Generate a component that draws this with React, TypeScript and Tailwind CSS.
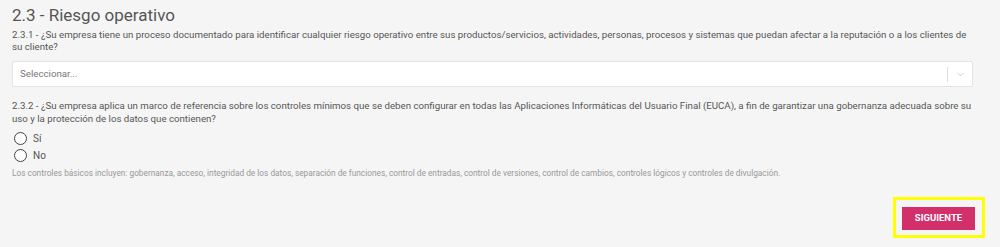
import { ChevronDown } from "lucide-react";

export default function App() {
  return (
    <div
      className="w-[1000px] h-[247px] bg-[#f5f5f5] text-[#555] overflow-hidden"
      style={{ fontFamily: "Roboto, 'Liberation Sans', sans-serif" }}
    >
      <div className="pl-3 pr-[27px] pt-[3px]">
        {/* Section title */}
        <h2 className="text-[17px] leading-[24px] font-normal text-[#555]">2.3 - Riesgo operativo</h2>

        {/* Question 2.3.1 */}
        <p className="mt-[2px] text-[9.7px] leading-[12px]">
          2.3.1 - ¿Su empresa tiene un proceso documentado para identificar cualquier riesgo operativo entre sus
          productos/servicios, actividades, personas, procesos y sistemas que puedan afectar a la reputación o a los
          clientes de su cliente?
        </p>

        <div className="mt-[8px] h-[26px] bg-white border border-[#e3e3e3] rounded-[2px] flex items-center">
          <span className="flex-1 pl-[7px] text-[9.7px] text-[#777]">Seleccionar...</span>
          <span className="w-px h-[15px] bg-[#ddd]" />
          <span className="w-[24px] flex justify-center text-[#bbb]">
            <ChevronDown size={11} strokeWidth={1.5} />
          </span>
        </div>

        {/* Question 2.3.2 */}
        <p className="mt-[12px] text-[9.7px] leading-[13px]">
          2.3.2 - ¿Su empresa aplica un marco de referencia sobre los controles mínimos que se deben configurar en todas
          las Aplicaciones Informáticas del Usuario Final (EUCA), a fin de garantizar una gobernanza adecuada sobre su
          uso y la protección de los datos que contienen?
        </p>

        <div className="mt-[7px] flex flex-col gap-[4px] pl-[2px]">
          <label className="flex items-center gap-[6px] text-[10px] leading-[13px]">
            <span className="w-[13px] h-[13px] rounded-full border border-[#444] bg-white" />
            Sí
          </label>
          <label className="flex items-center gap-[6px] text-[10px] leading-[13px]">
            <span className="w-[13px] h-[13px] rounded-full border border-[#444] bg-white" />
            No
          </label>
        </div>

        <p className="mt-[6px] text-[8.3px] leading-[11px] text-[#999]">
          Los controles básicos incluyen: gobernanza, acceso, integridad de los datos, separación de funciones, control
          de entradas, control de versiones, control de cambios, controles lógicos y controles de divulgación.
        </p>

        {/* Footer action */}
        <div className="mt-[18px] -mr-[12px] flex justify-end">
          <div className="border-[3px] border-[#ffff00] pl-[6px] pr-[7px] pt-[7px] pb-[5px]">
            <button className="block w-[73px] h-[23px] bg-[#d1306b] text-white text-[9.5px] font-bold">
              SIGUIENTE
            </button>
          </div>
        </div>
      </div>
    </div>
  );
}
